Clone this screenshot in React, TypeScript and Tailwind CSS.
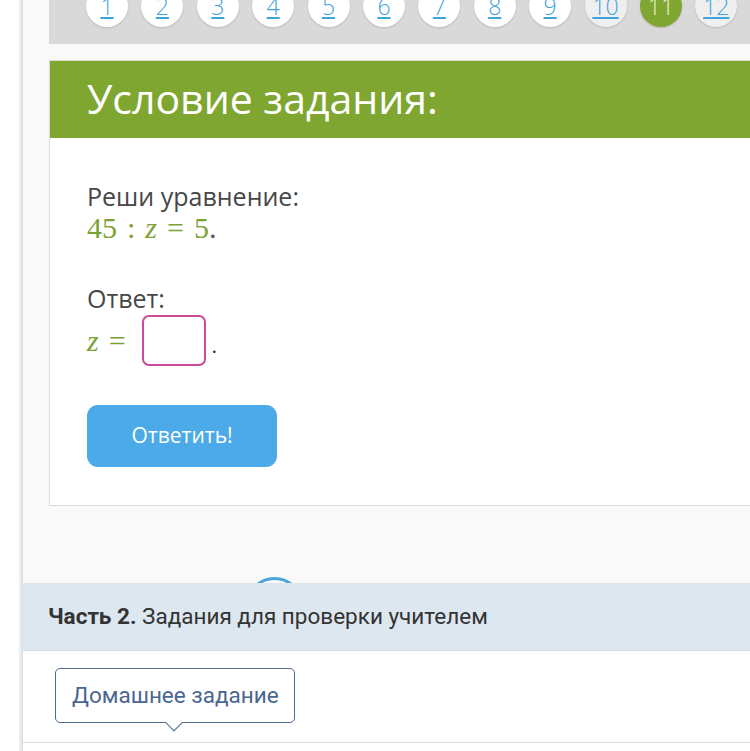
import React from "react"

const pages = [1, 2, 3, 4, 5, 6, 7, 8, 9, 10, 11, 12]

function PageCircle({ n }: { n: number }) {
  if (n === 11) {
    return (
      <div className="w-[42px] h-[42px] shrink-0 rounded-full bg-[#80a632] flex items-center justify-center shadow-[0_1px_2px_rgba(0,0,0,0.15)]">
        <span className="text-[23px] font-light text-[#eaf5c9]">{n}</span>
      </div>
    )
  }
  const visited = n === 10 || n === 12
  return (
    <div
      className={
        visited
          ? "w-[42px] h-[42px] shrink-0 rounded-full bg-[#efefef] flex items-center justify-center shadow-[0_1px_2px_rgba(0,0,0,0.15)]"
          : "w-[42px] h-[42px] shrink-0 rounded-full bg-white flex items-center justify-center shadow-[0_1px_2px_rgba(0,0,0,0.15)]"
      }
    >
      <span className="text-[23px] font-light text-[#3fa3dc] underline underline-offset-2">{n}</span>
    </div>
  )
}

export default function App() {
  return (
    <div className="w-[750px] h-[751px] overflow-hidden flex bg-white font-['Open_Sans',sans-serif]">
      {/* left page edge */}
      <div className="w-[19px] shrink-0 bg-white" />
      <div className="w-[4px] shrink-0 bg-gradient-to-r from-[#f4f4f4] to-[#dcdcdc]" />

      <div className="flex-1 flex flex-col bg-[#f9f9f9] min-w-0">
        {/* pagination */}
        <div className="ml-[26px] h-[44px] bg-[#d9d9d9] overflow-hidden shrink-0">
          <div className="flex gap-[13.4px] pl-[37px] -mt-[15px]">
            {pages.map((n) => (
              <PageCircle key={n} n={n} />
            ))}
          </div>
        </div>

        {/* task card */}
        <div className="ml-[26px] mt-[16px] border border-r-0 border-[#dcdcdc] bg-white shrink-0">
          <div className="h-[77px] bg-[#80a632] flex items-center pl-[37px]">
            <h1 className="text-[41px] text-white leading-none -mt-[2px]">Условие задания:</h1>
          </div>
          <div className="pl-[37px] pt-[43px] pb-[38px]">
            <p className="text-[25px] leading-[30px] text-[#474747]">Реши уравнение:</p>
            <p className="text-[30px] leading-[34px] text-[#7ba233] font-['Liberation_Serif',serif]">
              45<span className="mx-[10px]">:</span>
              <i>z</i>
              <span className="mx-[10px]">=</span>5<span className="text-[#555]">.</span>
            </p>
            <p className="mt-[38px] text-[25px] leading-[30px] text-[#474747]">Ответ:</p>
            <div className="mt-[2px] flex items-center font-['Liberation_Serif',serif] text-[30px] text-[#7ba233]">
              <i>z</i>
              <span className="ml-[10px]">=</span>
              <div className="ml-[16px] w-[64px] h-[51px] rounded-[7px] border-2 border-[#cc4a9c] bg-white" />
              <span className="ml-[6px] text-[#333] text-[22px] mt-[10px]">.</span>
            </div>
            <button className="mt-[39px] w-[190px] h-[62px] rounded-[11px] bg-[#4daae8] text-white text-[21px]">
              Ответить!
            </button>
          </div>
        </div>

        {/* part 2 */}
        <div className="relative mt-[77px] shrink-0">
          <div className="absolute left-[223px] -top-[6px] w-[57px] h-[57px] rounded-full border-[3px] border-[#4aa6d8] bg-[#f9f9f9]" />
          <div className="relative h-[67px] bg-[#dde7f0] flex items-center pl-[25px]">
            <p className="text-[22.5px] text-[#333] font-['Roboto',sans-serif]">
              <b className="font-bold">Часть 2.</b> Задания для проверки учителем
            </p>
          </div>
        </div>
        <div className="bg-white border-t border-[#d6dde4] border-b border-b-[#dcdcdc] pt-[17px] pl-[32px] pb-[19px]">
          <div className="relative w-[240px] h-[55px] border-[1.5px] border-[#4d6c8f] rounded-[5px] bg-white flex items-center pl-[16px]">
            <span className="text-[22.5px] text-[#4a6790] font-['Roboto',sans-serif]">Домашнее задание</span>
            <div className="absolute left-[112px] -bottom-[7px] w-[12px] h-[12px] bg-white border-r-[1.5px] border-b-[1.5px] border-[#4d6c8f] rotate-45" />
          </div>
        </div>
        <div className="flex-1 bg-white" />
      </div>
    </div>
  )
}
